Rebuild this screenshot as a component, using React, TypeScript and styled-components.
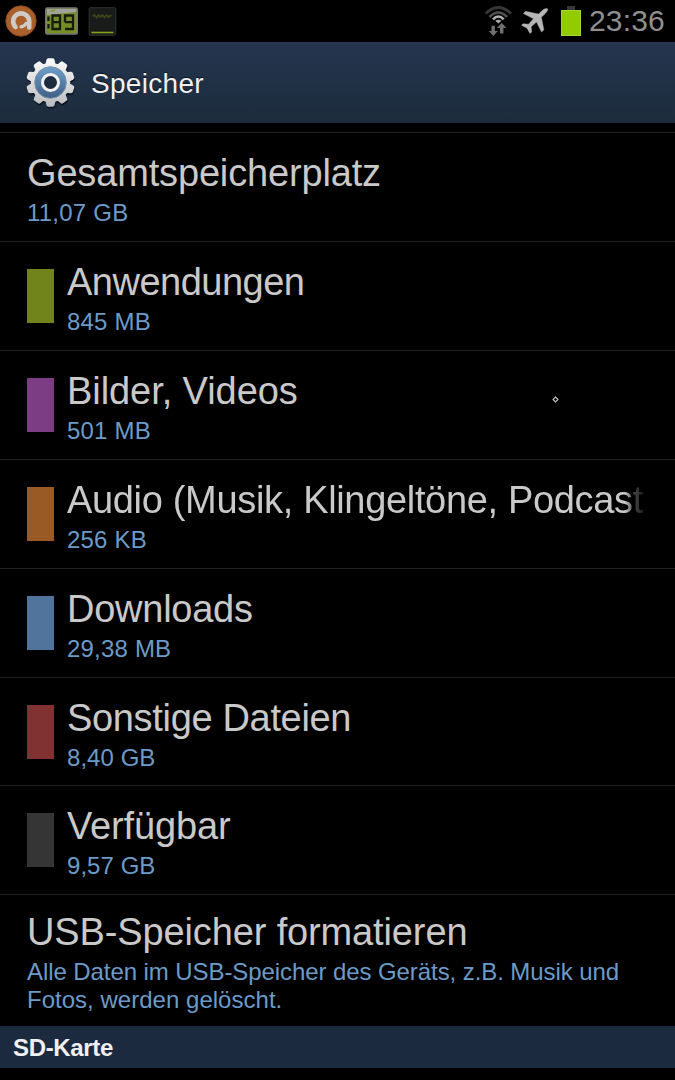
import React from 'react';
import styled, { createGlobalStyle } from 'styled-components';

const Global = createGlobalStyle`
  html, body { margin: 0; background: #000; }
  body { font-family: "Liberation Sans", Arial, sans-serif; overflow: hidden; }
`;

const Screen = styled.div`
  width: 675px;
  height: 1080px;
  display: flex;
  flex-direction: column;
  background: #000;
  overflow: hidden;
`;

const StatusBar = styled.div`
  flex: none;
  box-sizing: border-box;
  height: 42px;
  display: flex;
  align-items: center;
  justify-content: space-between;
  padding: 0 10px 0 4px;
`;

const StatusGroup = styled.div<{ $gap: number }>`
  display: flex;
  align-items: center;
  gap: ${(p) => p.$gap}px;
`;

const Icon = styled.svg`
  display: block;
  flex: none;
`;

const Clock = styled.span`
  font-size: 30px;
  line-height: 42px;
  letter-spacing: 0.2px;
  color: #8f8f8f;
`;

const TitleBar = styled.header`
  flex: none;
  box-sizing: border-box;
  height: 81px;
  display: flex;
  align-items: center;
  gap: 16px;
  padding: 3px 0 0 26px;
  background: linear-gradient(#25354f, #1c2c3c);
`;

const Title = styled.h1`
  margin: 0;
  font-size: 28px;
  font-weight: 400;
  line-height: 40px;
  letter-spacing: 0.3px;
  color: #f0f0f0;
  text-shadow: 0 -1px 1px #0c1624;
`;

const List = styled.main`
  flex: none;
  padding-top: 9px;
`;

const Row = styled.section<{ $height: number; $top: number }>`
  box-sizing: border-box;
  height: ${(p) => p.$height}px;
  display: flex;
  gap: 13px;
  padding: ${(p) => p.$top}px 28px 0 27px;
  border-top: 1px solid #202020;
`;

const Swatch = styled.div<{ $color: string }>`
  flex: none;
  width: 27px;
  height: 54px;
  margin-top: 9px;
  background: ${(p) => p.$color};
`;

const Texts = styled.div`
  flex: 1;
  min-width: 0;
`;

const Label = styled.div<{ $spacing: number; $fade?: boolean }>`
  font-size: 38px;
  line-height: 44px;
  letter-spacing: ${(p) => p.$spacing}px;
  color: #c9c9c9;
  white-space: nowrap;
  ${(p) => p.$fade && 'mask-image: linear-gradient(to right, #000 558px, rgba(0,0,0,.35) 567px, rgba(0,0,0,.15) 577px);'}
`;

const Value = styled.div<{ $spacing: number }>`
  font-size: 24px;
  line-height: 28px;
  margin-top: 4px;
  letter-spacing: ${(p) => p.$spacing}px;
  color: #6b9bc8;
`;

const ValueLine = styled.span<{ $spacing: number }>`
  display: block;
  letter-spacing: ${(p) => p.$spacing}px;
`;

const SectionBar = styled.footer`
  flex: none;
  height: 42px;
  padding-left: 13px;
  background: #1b2a3f;
  color: #f0f0f0;
  font-size: 24px;
  font-weight: 700;
  line-height: 44px;
  letter-spacing: -0.35px;
`;

const Pointer = styled.svg`
  position: absolute;
  left: 552px;
  top: 396px;
`;

type Item = {
  label: string;
  value: string;
  color?: string;
  height: number;
  top: number;
  ls: number;
  vs: number;
  fade?: boolean;
};

const items: Item[] = [
  { label: 'Gesamtspeicherplatz', value: '11,07 GB', height: 109, top: 18, ls: -0.16, vs: 0.22 },
  { label: 'Anwendungen', value: '845 MB', color: '#71841b', height: 109, top: 18, ls: -0.5, vs: 0.2 },
  { label: 'Bilder, Videos', value: '501 MB', color: '#7d3d84', height: 109, top: 18, ls: -0.07, vs: 0.2 },
  { label: 'Audio (Musik, Klingeltöne, Podcast', value: '256 KB', color: '#9a5a26', height: 109, top: 18, ls: -0.33, vs: 0.2, fade: true },
  { label: 'Downloads', value: '29,38 MB', color: '#50749c', height: 109, top: 17.5, ls: -0.25, vs: 0.2 },
  { label: 'Sonstige Dateien', value: '8,40 GB', color: '#803233', height: 108, top: 17.5, ls: -0.33, vs: 0.05 },
  { label: 'Verfügbar', value: '9,57 GB', color: '#353535', height: 109, top: 18, ls: -0.15, vs: 0.05 },
];

const teeth = Array.from({ length: 10 }, (_, i) => i * 36);

const Gear = () => (
  <Icon width="49" height="52" viewBox="0 0 49 52">
    <defs>
      <linearGradient id="metal" x1="0" y1="0" x2="0" y2="49" gradientUnits="userSpaceOnUse">
        <stop offset="0" stopColor="#fbfbfb" />
        <stop offset="1" stopColor="#b9bbbd" />
      </linearGradient>
      <linearGradient id="ring" x1="0" y1="0" x2="0" y2="1">
        <stop offset="0" stopColor="#6f9fca" />
        <stop offset="1" stopColor="#3e5f85" />
      </linearGradient>
      <mask id="teeth">
        {teeth.map((a) => (
          <path key={a} d="M19.300 7L20.400 2Q20.800 .3 22.300 .3H26.700Q28.200 .3 28.600 2L29.700 7Z" fill="#fff" transform={`rotate(${a} 24.5 24.5)`} />
        ))}
        <circle cx="24.5" cy="24.5" r="19.700" fill="#fff" />
      </mask>
    </defs>
    <g transform="translate(.5 1.8)"><rect width="49" height="49" fill="#0d1520" mask="url(#teeth)" /></g>
    <rect width="49" height="49" fill="url(#metal)" mask="url(#teeth)" />
    <circle cx="24.5" cy="24.5" r="15.8" fill="url(#ring)" stroke="#7890ab" strokeWidth="1" />
    <circle cx="24.5" cy="24.5" r="8" fill="#1c2b40" stroke="#f1f1f1" strokeWidth="3" />
  </Icon>
);

const SwirlIcon = () => (
  <Icon width="33" height="34" viewBox="0 0 33 34">
    <circle cx="17" cy="17" r="15.2" fill="#a9602b" stroke="#8a4522" strokeWidth="1" />
    <path d="M11.500 23A8 8 0 1 1 25.200 17.500V23.500" fill="none" stroke="#cfccc8" strokeWidth="4.600" strokeLinecap="round" />
    <path d="M17 22.800Q20.500 22.300 22 19.500" fill="none" stroke="#cfccc8" strokeWidth="3.200" strokeLinecap="round" />
  </Icon>
);

const CounterIcon = () => (
  <Icon width="33" height="28" viewBox="0 0 33 28">
    <rect x=".8" y="1" width="31.400" height="26" rx="1.500" fill="#778d28" stroke="#777" strokeWidth="1.600" />
    <path d="M2 2H31V5L2 8Z" fill="#a1a39b" />
    <path d="M3 4.500L10 2V4.500Z" fill="#819b20" />
    <path d="M3.500 9.500V14M3.500 17V21.500M7.500 8.500H15V22H7.500ZM7.500 15.200H15M20 15.200V8.500H28V22H20M20 15.200H28" fill="none" stroke="#171b0c" strokeWidth="2.300" />
  </Icon>
);

const GraphIcon = () => (
  <Icon width="31" height="29" viewBox="-2.5 0 31 29">
    <rect x=".7" y=".7" width="26.600" height="27.600" rx="1" fill="#191b1b" stroke="#303232" />
    <path d="M4 9.500L6 8 8 10.500 10 8 12 10 14 8 16 10.500 18 8 20 10 23 8" fill="none" stroke="#3c4519" strokeWidth="1.800" />
    <path d="M3 25.500H25" stroke="#88a31a" strokeWidth="1.600" />
  </Icon>
);

const WifiIcon = () => (
  <Icon width="30" height="32" viewBox="0 0 30 32">
    <g fill="none">
      <path d="M1.800 8.500Q14.300 -3.500 27 8.500" stroke="#383838" strokeWidth="3" />
      <path d="M5.500 12Q14.300 3 23 12" stroke="#505050" strokeWidth="2.600" />
      <path d="M9 14.300Q14.300 8.800 19.700 14.300" stroke="#b0b0b0" strokeWidth="2.600" />
    </g>
    <path d="M11.200 15.800Q14.300 13.500 17.500 15.800L14.300 18.500Z" fill="#a8a8a8" />
    <path d="M7.500 20.700h3.400v5.300h3L9.300 31 4.800 26h2.700ZM16 28.500V23h-3l4.700-5.200L22.300 23h-2.900v5.500Z" fill="#707070" />
  </Icon>
);

const PlaneIcon = () => (
  <Icon width="33" height="26" viewBox="0 0 33 26">
    <path d="M26.500 .8C25 .1 22.800 1 21 2.700L17.500 6 4.500 3.300 2.300 5.500 12.500 10.800 7.500 16.200 2 15.700 .5 17.300 6 20.200 9 25.500 10.700 24 10.200 18.800 15.500 14 20.500 24 22.900 21.800 20.300 9.300 23.800 5.900C26 3.700 27.500 1.700 26.500 .8Z" fill="#b6b6b6" stroke="#b6b6b6" strokeWidth=".4" strokeLinejoin="round" />
  </Icon>
);

const BatteryIcon = () => (
  <Icon width="21" height="32" viewBox="0 0 21 32">
    <rect x="6" y="1" width="8" height="4" fill="#353535" />
    <rect x=".5" y="5.500" width="19" height="25" fill="#92cc00" stroke="#a2d630" />
  </Icon>
);

export default function App() {
  return (
    <Screen>
      <Global />
      <StatusBar>
        <StatusGroup $gap={8}>
          <SwirlIcon />
          <CounterIcon />
          <GraphIcon />
        </StatusGroup>
        <StatusGroup $gap={7}>
          <WifiIcon />
          <PlaneIcon />
          <BatteryIcon />
          <Clock>23:36</Clock>
        </StatusGroup>
      </StatusBar>
      <TitleBar>
        <Gear />
        <Title>Speicher</Title>
      </TitleBar>
      <List>
        {items.map((it) => (
          <Row key={it.label} $height={it.height} $top={it.top}>
            {it.color && <Swatch $color={it.color} />}
            <Texts>
              <Label $spacing={it.ls} $fade={it.fade}>{it.label}</Label>
              <Value $spacing={it.vs}>{it.value}</Value>
            </Texts>
          </Row>
        ))}
        <Row $height={132} $top={15}>
          <Texts>
            <Label $spacing={-0.13}>USB-Speicher formatieren</Label>
            <Value $spacing={0}>
              <ValueLine $spacing={-0.08}>Alle Daten im USB-Speicher des Geräts, z.B. Musik und</ValueLine>
              <ValueLine $spacing={0.02}>Fotos, werden gelöscht.</ValueLine>
            </Value>
          </Texts>
        </Row>
      </List>
      <SectionBar>SD-Karte</SectionBar>
      <Pointer width="7" height="7" viewBox="0 0 7 7">
        <path d="M3.500 1L6 3.500 3.500 6 1 3.500Z" fill="none" stroke="#c5c5c5" strokeWidth="1.100" />
      </Pointer>
    </Screen>
  );
}
